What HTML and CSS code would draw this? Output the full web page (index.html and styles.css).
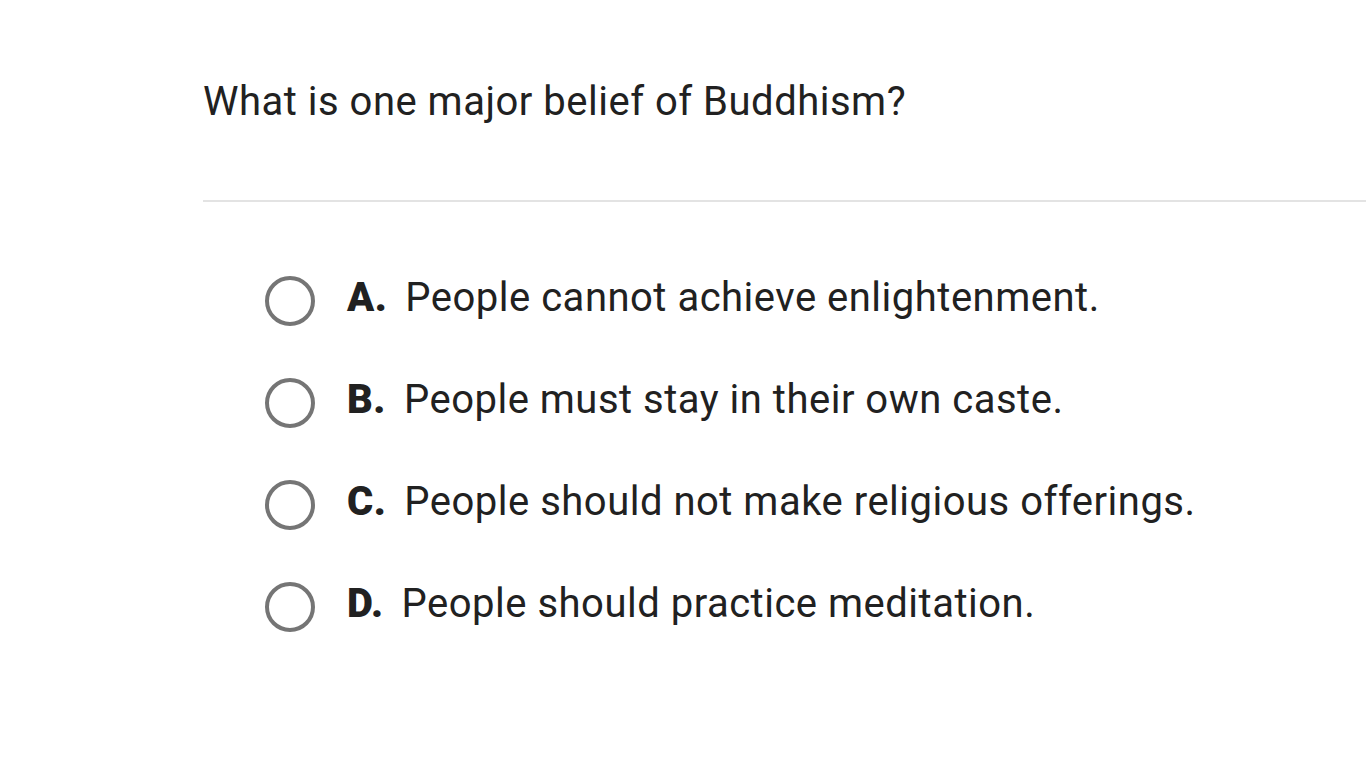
FILE: index.html
```html
<!DOCTYPE html>
<html lang="en">
<head>
<meta charset="utf-8">
<title>Question</title>
<link rel="stylesheet" href="styles.css">
</head>
<body>
<main class="page">
  <h1 class="question">What is one major belief of Buddhism?</h1>
  <hr class="divider">
  <ul class="options">
    <li class="option"><span class="radio"></span><span class="label">A.</span><span class="text">People cannot achieve enlightenment.</span></li>
    <li class="option"><span class="radio"></span><span class="label">B.</span><span class="text">People must stay in their own caste.</span></li>
    <li class="option"><span class="radio"></span><span class="label">C.</span><span class="text">People should not make religious offerings.</span></li>
    <li class="option"><span class="radio"></span><span class="label">D.</span><span class="text">People should practice meditation.</span></li>
  </ul>
</main>
</body>
</html>
```
FILE: styles.css
```css
html, body {
  margin: 0;
  padding: 0;
  background: #ffffff;
}
body {
  font-family: Roboto, "Liberation Sans", sans-serif;
  color: #212121;
  width: 1366px;
  height: 768px;
  overflow: hidden;
}
.page {
  padding-left: 203px;
  padding-top: 74px;
}
.question {
  margin: 0;
  font-size: 40px;
  font-weight: 400;
  line-height: 56px;
  letter-spacing: 0.5px;
}
.divider {
  margin: 70px 0 0 0;
  border: 0;
  height: 2px;
  background: #e3e3e3;
}
.options {
  list-style: none;
  margin: 0;
  padding: 0 0 0 62px;
  padding-top: 74px;
  display: flex;
  flex-direction: column;
  gap: 52px;
}
.option {
  display: flex;
  align-items: center;
  height: 50px;
}
.radio {
  box-sizing: border-box;
  width: 50px;
  height: 50px;
  border: 4px solid #757575;
  border-radius: 50%;
  flex: none;
  margin-right: 32px;
}
.label,
.text {
  font-size: 40px;
  line-height: 50px;
  letter-spacing: 0.5px;
  position: relative;
  top: -3px;
}
.label {
  font-weight: 900;
  margin-right: 18px;
}
```
